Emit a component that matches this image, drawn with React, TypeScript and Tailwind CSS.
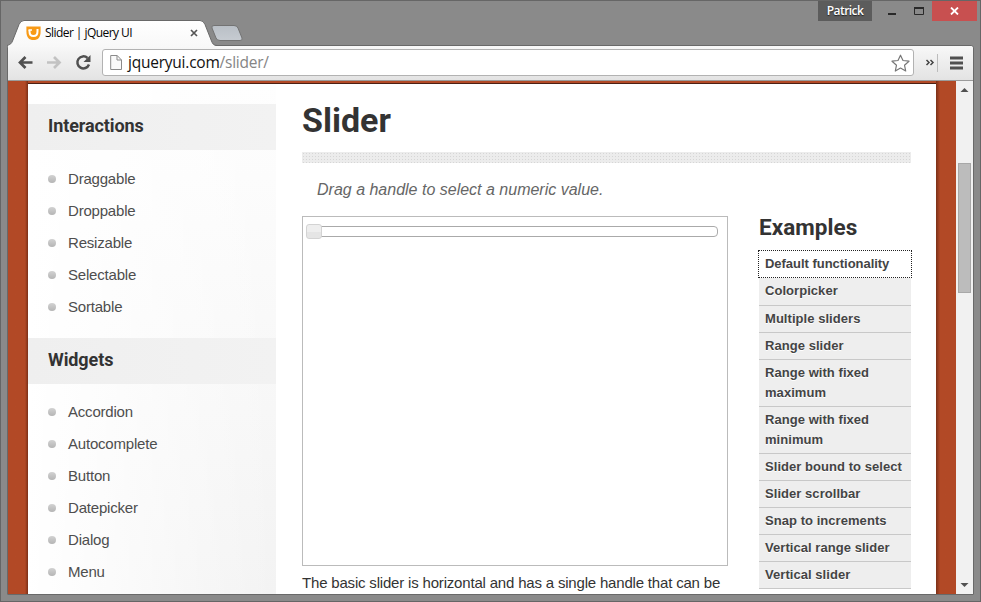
import React from "react";

const interactions = ["Draggable", "Droppable", "Resizable", "Selectable", "Sortable"];
const widgets = ["Accordion", "Autocomplete", "Button", "Datepicker", "Dialog", "Menu"];
const examples = [
  "Multiple sliders",
  "Range slider",
  "Range with fixed maximum",
  "Range with fixed minimum",
  "Slider bound to select",
  "Slider scrollbar",
  "Snap to increments",
  "Vertical range slider",
  "Vertical slider",
];

function TitleBar() {
  return (
    <header className="relative flex h-[44px] shrink-0 items-start">
      <svg className="absolute left-0 top-0 z-10" width="260" height="46" viewBox="1 1 260 46">
        <defs>
          <linearGradient id="tab" x1="0" y1="0" x2="0" y2="1">
            <stop offset="0" stopColor="#ffffff" />
            <stop offset="1" stopColor="#f8f8f8" />
          </linearGradient>
          <linearGradient id="newtab" x1="0" y1="0" x2="0" y2="1">
            <stop offset="0" stopColor="#b9bfc6" />
            <stop offset="1" stopColor="#c6cbd1" />
          </linearGradient>
        </defs>
        <path d="M8 47V45C10.500 44.500 11.500 43.500 12.500 41L19 24.500Q20.500 20.500 24 20.500H200Q203.500 20.500 205 24.500L211.500 41C212.500 43.500 213.500 45.500 217 46V47Z" fill="url(#tab)" />
        <path d="M7 45.500C10.500 44.500 11.500 43.500 12.500 41L19 24.500Q20.500 20.500 24 20.500H200Q203.500 20.500 205 24.500L211.500 41C212.500 43.500 213.500 45.500 217 45.500" fill="none" stroke="#696969" />
        <path d="M212 28Q211 25.500 214 25.500H234Q237 25.500 238 28L242 38Q243 40.500 240 40.500H220Q217 40.500 216 38Z" fill="url(#newtab)" stroke="#737373" />
      </svg>
      <div className="relative z-20 mt-[21px] flex h-[22px] w-[216px] items-center pl-[25px]">
        <svg width="15" height="15" viewBox="0 0 15 15">
          <path d="M.4 .5H14.600V5.500C14.600 11.500 12 14 7.500 14S.4 11.500 .4 5.500Z" fill="#f89a16" />
          <path d="M3.500 4V5.500C3.500 8.500 4.800 10 7.500 10S11.500 8.500 11.500 5.500V3" fill="none" stroke="#fff" strokeWidth="2" />
          <path d="M2.500 4h3.500" fill="none" stroke="#fff" strokeWidth="1.500" />
        </svg>
        <span className="ml-1 w-[139px] whitespace-nowrap font-['Open_Sans','Noto_Sans',sans-serif] text-[12px] leading-[20px] tracking-[-0.56px] text-[#050505]">Slider | jQuery UI</span>
        <svg className="ml-[6px]" width="8" height="8" viewBox="0 0 8 8">
          <path d="m1 1 6 6M7 1 1 7" stroke="#555" strokeWidth="1.700" />
        </svg>
      </div>
      <div className="ml-auto flex h-5 items-center">
        <span className="flex h-5 w-[54px] items-center justify-center bg-[#5c5c5c] font-['Open_Sans','Noto_Sans',sans-serif] text-[12px] font-semibold tracking-[-0.55px] text-white [text-shadow:0_1px_1px_#222]">Patrick</span>
        <svg width="60" height="20" viewBox="0 0 60 20">
          <path d="M16 13h8" stroke="#292929" strokeWidth="2" />
          <path d="M42.500 6.500h9v7h-9z" fill="none" stroke="#292929" />
          <path d="M42 7h10" stroke="#292929" strokeWidth="2" />
        </svg>
        <span className="flex h-5 w-[45px] items-center justify-center bg-[#c85050]">
          <svg width="9" height="8" viewBox="0 0 9 8"><path d="m1 .5 7 7M8 .5l-7 7" stroke="#fff" strokeWidth="1.800" /></svg>
        </span>
        <span className="w-[3px]" />
      </div>
    </header>
  );
}

function Toolbar() {
  return (
    <div className="flex h-[35px] shrink-0 items-center rounded-tr-[3px] border-b border-[#9b9b9b] bg-linear-to-b from-[#f8f8f8] to-[#e3e3e3] pb-px pl-[10px]">
      <svg width="78" height="18" viewBox="18.500 54 78 18" fill="none">
        <path d="M26 57l-5.500 5.500L26 68M21.500 62.500H33" stroke="#505050" strokeWidth="2.700" />
        <path d="M54.500 57l5.500 5.500-5.500 5.500M59 62.500H47.500" stroke="#c2c2c2" strokeWidth="2.700" />
        <path d="M88 58A6 6 0 1 0 89.500 64.500" stroke="#505050" strokeWidth="2.500" />
        <path d="M91 55v7h-7z" fill="#505050" />
      </svg>
      <div className="ml-[6px] flex h-[27px] w-[812px] items-center rounded-[3px] border border-[#b2b2b2] bg-white pl-[7px] pr-[3px]">
        <svg width="12" height="15" viewBox="0 0 12 15">
          <path d="M.7.5H7.200L11.500 5V14.500H.7Z" fill="#fafafa" stroke="#8b8b8b" />
          <path d="M7 .5V5h4.500" fill="none" stroke="#8b8b8b" />
        </svg>
        <span className="mb-px ml-[6px] whitespace-nowrap font-['Open_Sans','Noto_Sans',sans-serif] text-[15.500px] leading-[24px] tracking-[-0.23px] text-[#111]">jqueryui.com<span className="text-[#858585]">/slider/</span></span>
        <svg className="ml-auto" width="19" height="18" viewBox="0 0 19 18">
          <path d="M9.500 1.200 12 6.500l6 .7-4.500 4 1.200 5.800-5.200-2.900-5.200 2.900 1.200-5.800L1 7.200l6-.7Z" fill="#fff" stroke="#777" strokeWidth="1.200" strokeLinejoin="round" />
        </svg>
      </div>
      <svg className="ml-[10px]" width="43" height="28" viewBox="924 48 43 28" fill="none">
        <path d="m926.500 59 2.500 2.500-2.500 2.500M930.500 59l2.500 2.500-2.500 2.500" stroke="#444" strokeWidth="1.500" />
        <path d="M937.500 53v18" stroke="#bcbcbc" />
        <path d="M950 57h13M950 62h13M950 67h13" stroke="#505050" strokeWidth="2.800" />
      </svg>
    </div>
  );
}

function NavGroup({ title, items, className }: { title: string; items: string[]; className: string }) {
  return (
    <section>
      <h3 className="flex h-[46px] items-center bg-linear-to-r from-[#efefef] to-[#f2f2f2] pb-[3px] pl-5 font-[Roboto,sans-serif] text-[18px] font-bold tracking-[-0.1px] text-[#333]">{title}</h3>
      <ul className={className}>
        {items.map((item) => (
          <li key={item} className="flex h-8 items-center pl-5 font-['Liberation_Sans',Arial,sans-serif] text-[15px] tracking-[-0.2px] text-[#4e4e4e]">
            <span className="mr-3 size-2 rounded-full bg-linear-to-b from-[#d2d2d2] to-[#b5b5b5]" />
            {item}
          </li>
        ))}
      </ul>
    </section>
  );
}

function Scrollbar() {
  return (
    <div className="flex w-[17px] shrink-0 flex-col items-center bg-[#f1f1f1]">
      <svg className="mt-[6px]" width="9" height="6" viewBox="0 0 9 6"><path d="M.5 5h8L4.500 1Z" fill="#505050" /></svg>
      <div className="mt-[70px] h-[130px] w-[13px] border border-[#a8a8a8] bg-[#bcbcbc]" />
      <svg className="mb-[6px] mt-auto" width="9" height="6" viewBox="0 0 9 6"><path d="M.5 1h8L4.500 5Z" fill="#505050" /></svg>
    </div>
  );
}

export default function App() {
  return (
    <div className="flex h-[602px] w-[981px] flex-col overflow-hidden border border-[#666] bg-[#8a8a8a]">
      <TitleBar />
      <div className="ml-[6px] flex h-[550px] w-[967px] shrink-0 flex-col overflow-hidden rounded-t-[3px] border border-[#696969] bg-white">
        <Toolbar />
        <div className="flex h-[513px] shrink-0 overflow-hidden bg-[#b24926]">
          <div className="w-5 shrink-0 bg-linear-to-r from-[#b24926] from-85% to-[#7b3018]" />
          <main className="mt-[2px] flex h-[511px] w-[908px] shrink-0 overflow-hidden border-t border-[#4c2013] bg-white">
            <aside className="h-[511px] w-[248px] shrink-0 bg-[linear-gradient(to_right,#fff,rgba(255,255,255,0)),linear-gradient(to_bottom,#fefefe,#f3f3f3)] pt-5">
              <NavGroup title="Interactions" items={interactions} className="pb-[15px] pt-[13px]" />
              <NavGroup title="Widgets" items={widgets} className="pt-[12px]" />
            </aside>
            <article className="ml-[26px] w-[609px] pt-[13px]">
              <h1 className="h-[55px] font-[Roboto,sans-serif] text-[34px] font-bold leading-[46px] text-[#333]">Slider</h1>
              <div className="h-[11px] bg-[#ececec] bg-[radial-gradient(#d6d6d6_0.7px,transparent_1px)] bg-size-[3px_3px]" />
              <p className="mt-[15px] h-[24px] pl-[15px] font-['Liberation_Sans',Arial,sans-serif] text-[16px] italic leading-[24px] text-[#666]">Drag a handle to select a numeric value.</p>
              <div className="mt-[14px] flex justify-between">
                <div className="w-[426px]">
                  <div className="h-[350px] border border-[#bbb] pl-[3px] pt-[7px]">
                    <div className="flex h-[15px] items-center">
                      <div className="z-10 h-[15px] w-4 shrink-0 rounded-[3px] border border-[#d3d3d3] bg-linear-to-b from-[#eee] from-50% to-[#e5e5e5] to-50%" />
                      <div className="-ml-1 h-[11px] w-[400px] rounded-r-[4px] border border-[#aaa] bg-white" />
                    </div>
                  </div>
                  <p className="mt-[6px] whitespace-nowrap font-['Liberation_Sans',Arial,sans-serif] text-[15px] leading-[22px] tracking-[-0.185px] text-[#333]">The basic slider is horizontal and has a single handle that can be</p>
                </div>
                <nav className="-mr-px w-[154px] font-['Liberation_Sans',Arial,sans-serif] text-[13px] font-bold leading-[20px] tracking-[0.05px] text-[#444]">
                  <h2 className="h-[34px] pl-[1px] pt-[1px] font-[Roboto,sans-serif] text-[22.500px] leading-[20px] tracking-[0.05px] text-[#333]">Examples</h2>
                  <div className="h-[28px] border border-dotted border-[#222] pl-[6px] pt-[3px] tracking-[-0.03px]">Default functionality</div>
                  <div className="mx-px h-[28px] border-b border-[#c8c8c8] bg-[#eee] pl-[6px] pt-[3px] [text-shadow:0_1px_#fff]">Colorpicker</div>
                  {examples.map((item) => (
                    <div key={item} className="mx-px border-b border-[#c8c8c8] bg-[#eee] pb-[3px] pl-[6px] pt-[3px] [text-shadow:0_1px_#fff]">{item}</div>
                  ))}
                </nav>
              </div>
            </article>
          </main>
          <div className="w-5 shrink-0 bg-linear-to-r from-[#7b3018] to-[#b24926] to-20%" />
          <Scrollbar />
        </div>
      </div>
    </div>
  );
}
